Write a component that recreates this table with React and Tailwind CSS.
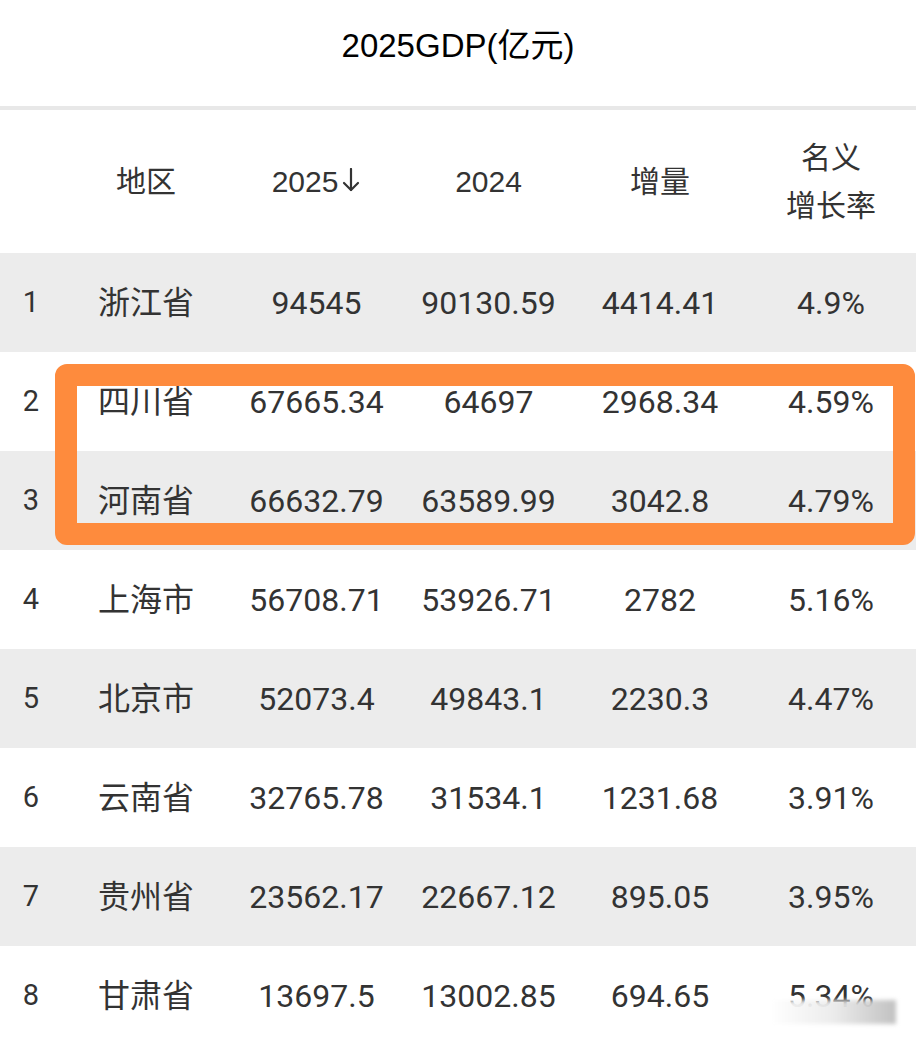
import React from "react";

const rows = [
  ["1", "浙江省", "94545", "90130.59", "4414.41", "4.9%"],
  ["2", "四川省", "67665.34", "64697", "2968.34", "4.59%"],
  ["3", "河南省", "66632.79", "63589.99", "3042.8", "4.79%"],
  ["4", "上海市", "56708.71", "53926.71", "2782", "5.16%"],
  ["5", "北京市", "52073.4", "49843.1", "2230.3", "4.47%"],
  ["6", "云南省", "32765.78", "31534.1", "1231.68", "3.91%"],
  ["7", "贵州省", "23562.17", "22667.12", "895.05", "3.95%"],
  ["8", "甘肃省", "13697.5", "13002.85", "694.65", "5.34%"],
];

const cols = "grid grid-cols-[62px_168px_173px_171px_172px_170px]";
const sans = "font-['Liberation_Sans','Noto_Sans_CJK_SC',sans-serif]";
const rob = "font-['Roboto','Noto_Sans_CJK_SC',sans-serif]";

function DownArrow() {
  return (
    <svg width="20" height="24" viewBox="0 0 20 24" className="inline-block ml-[3px] align-baseline" fill="none" stroke="#333" strokeWidth="2.2" strokeLinecap="round" strokeLinejoin="round">
      <path d="M10 1 V22" />
      <path d="M3 15 L10 22 L17 15" />
    </svg>
  );
}

export default function App() {
  return (
    <div className="w-[916px] h-[1042px] overflow-hidden bg-white">
      <div className={`h-[106px] flex items-center justify-center text-[33px] text-black ${sans} pb-[14px]`}>
        2025GDP(亿元)
      </div>
      <div className="h-[4px] bg-[#e8e8e8]" />
      <div className={`${cols} h-[143px] items-center text-[30px] text-[#333] ${sans}`}>
        <div />
        <div className="text-center">地区</div>
        <div className="text-center">
          2025
          <DownArrow />
        </div>
        <div className="text-center">2024</div>
        <div className="text-center">增量</div>
        <div className="text-center leading-[48px]">
          <div>名义</div>
          <div>增长率</div>
        </div>
      </div>
      <div className="relative">
        {rows.map((r, i) => (
          <div
            key={i}
            className={`${cols} relative h-[99px] items-center text-[32px] text-[#333] ${rob} ${
              i % 2 === 0 ? "bg-[#ececec]" : "bg-white"
            }`}
          >
            <div className="text-center text-[29px]">{r[0]}</div>
            <div className="text-center">{r[1]}</div>
            <div className="text-center">{r[2]}</div>
            <div className="text-center">{r[3]}</div>
            <div className="text-center">{r[4]}</div>
            <div className="text-center">{r[5]}</div>
            {i === 7 && (
              <div className="absolute left-[770px] top-[54px] w-[126px] h-[24px] bg-[linear-gradient(to_right,rgba(255,255,255,0.95),rgba(235,235,235,0.95)_50%,rgba(190,190,190,0.95))] blur-[2px]" />
            )}
          </div>
        ))}
        <div className="absolute left-[55px] top-[111px] w-[860px] h-[181px] border-[22px] border-[#fe8b3d] rounded-[12px]" />
      </div>
    </div>
  );
}
